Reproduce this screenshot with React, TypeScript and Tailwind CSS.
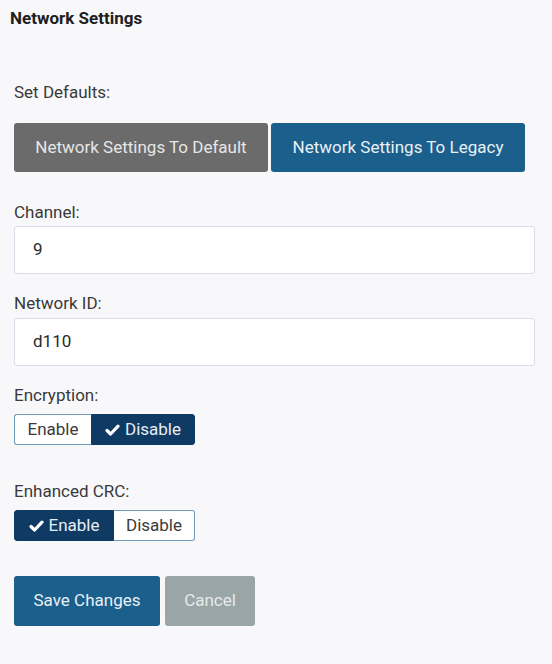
import React from "react";

function Check() {
  return (
    <svg width="15" height="12" viewBox="0 0 15 12" className="mr-[5px]" aria-hidden>
      <path d="M2 6.5 L5.6 10 L13 2.2" fill="none" stroke="white" strokeWidth="3.2" strokeLinecap="round" strokeLinejoin="round" />
    </svg>
  );
}

function Toggle({ enabled, widths }: { enabled: boolean; widths: [number, number] }) {
  const on = "bg-[#0f3a63] text-[#e8eef5] border-[#0f3a63]";
  const off = "bg-white text-[#3b3b3b] border-[#6f9cbc]";
  return (
    <div className="flex h-[31px] text-[17px]">
      <div
        style={{ width: widths[0] }}
        className={`flex items-center justify-center border rounded-l-[3px] ${enabled ? on : off} ${enabled ? "" : "border-r-0"}`}
      >
        {enabled && <Check />}
        Enable
      </div>
      <div
        style={{ width: widths[1] }}
        className={`flex items-center justify-center border rounded-r-[3px] ${!enabled ? on : off} ${!enabled ? "" : "border-l-0"}`}
      >
        {!enabled && <Check />}
        Disable
      </div>
    </div>
  );
}

export default function App() {
  return (
    <div
      className="w-[552px] h-[664px] bg-[#f8f8fa] px-[14px] text-[#3a3a3a]"
      style={{ fontFamily: "Roboto, 'Liberation Sans', sans-serif" }}
    >
      <div className="pt-[8px] -ml-[4px] text-[17px] font-bold leading-[20px] text-[#1e1e1e]">Network Settings</div>

      <div className="mt-[54px] text-[17px] leading-[20px]">Set Defaults:</div>
      <div className="mt-[21px] flex gap-[3px]">
        <button className="w-[254px] h-[49px] rounded-[3px] bg-[#6b6b6b] text-[#e6e6e6] text-[17px]">
          Network Settings To Default
        </button>
        <button className="w-[254px] h-[49px] rounded-[3px] bg-[#1b5f8c] text-[#e9f0f6] text-[17px]">
          Network Settings To Legacy
        </button>
      </div>

      <div className="mt-[30px] text-[17px] leading-[20px]">Channel:</div>
      <div className="mt-[4px] w-[521px] h-[48px] rounded-[3px] border border-[#d9dde8] bg-white flex items-center pl-[18px] text-[17px] text-[#2a2a2a]">
        9
      </div>

      <div className="mt-[19px] text-[17px] leading-[20px]">Network ID:</div>
      <div className="mt-[5px] w-[521px] h-[48px] rounded-[3px] border border-[#d9dde8] bg-white flex items-center pl-[18px] text-[17px] text-[#2a2a2a]">
        d110
      </div>

      <div className="mt-[19px] text-[17px] leading-[20px]">Encryption:</div>
      <div className="mt-[9px]">
        <Toggle enabled={false} widths={[77, 104]} />
      </div>

      <div className="mt-[36px] text-[17px] leading-[20px]">Enhanced CRC:</div>
      <div className="mt-[9px]">
        <Toggle enabled={true} widths={[100, 81]} />
      </div>

      <div className="mt-[35px] flex gap-[5px]">
        <button className="w-[146px] h-[50px] rounded-[3px] bg-[#1b5f8c] text-[#e9f0f6] text-[17px]">
          Save Changes
        </button>
        <button className="w-[90px] h-[50px] rounded-[3px] bg-[#9aa5a8] text-[#e7eaeb] text-[17px]">
          Cancel
        </button>
      </div>
    </div>
  );
}
